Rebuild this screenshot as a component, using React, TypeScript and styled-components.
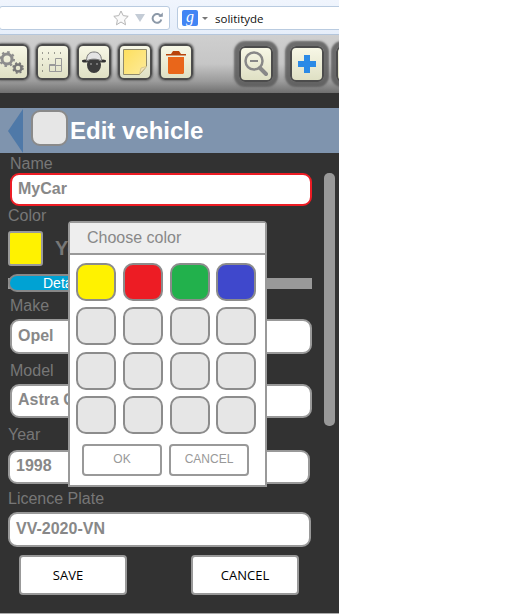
import React from 'react';
import styled, { createGlobalStyle } from 'styled-components';

const GlobalStyle = createGlobalStyle`
  html, body {
    margin: 0;
    padding: 0;
    background: #fff;
    font-family: 'Liberation Sans', Arial, sans-serif;
  }
`;

const Screen = styled.div`
  position: relative;
  width: 339px;
  height: 614px;
  overflow: hidden;
  background: #323232;
`;

const BrowserBar = styled.div`
  height: 35px;
  box-sizing: border-box;
  padding-top: 6px;
  display: flex;
  gap: 7px;
  background: linear-gradient(#f0f5fd, #e6eefa);
  border-bottom: 1px solid #b4c6dc;
`;

const UrlBox = styled.div`
  width: 171px;
  height: 24px;
  margin-left: -1px;
  box-sizing: border-box;
  display: flex;
  align-items: center;
  justify-content: flex-end;
  gap: 6px;
  padding-right: 6px;
  background: #fff;
  border: 1px solid #b9cbe0;
  border-radius: 3px;
`;

const SearchBox = styled.div`
  flex: 1;
  height: 24px;
  margin-right: -10px;
  box-sizing: border-box;
  display: flex;
  align-items: center;
  gap: 4px;
  padding-left: 4px;
  background: #fff;
  border: 1px solid #b9cbe0;
  border-radius: 3px;
  font-family: 'Open Sans', sans-serif;
  font-size: 11.5px;
  color: #111;
`;

const GoogleBadge = styled.span`
  width: 16px;
  height: 16px;
  border-radius: 2px;
  background: #4285f4;
  color: #fff;
  font-family: 'Liberation Serif', serif;
  font-style: italic;
  font-size: 16px;
  line-height: 13px;
  text-align: center;
`;

const Caret = styled.span`
  width: 0;
  height: 0;
  margin-right: 3px;
  border-left: 3px solid transparent;
  border-right: 3px solid transparent;
  border-top: 3px solid #777;
`;

const Toolbar = styled.div`
  height: 58px;
  box-sizing: border-box;
  display: flex;
  padding-top: 9px;
  margin-left: -5px;
  background: linear-gradient(#cfcfcf 0, #c6c6c6 50%, #9b9b9b 80%, #6f6f6f 100%);
`;

const ToolButton = styled.div<{ $halo?: boolean; $gapLeft?: number }>`
  flex: none;
  width: 34px;
  height: 36px;
  box-sizing: border-box;
  margin-left: ${p => p.$gapLeft ?? 7}px;
  margin-top: ${p => (p.$halo ? 2 : 0)}px;
  display: flex;
  align-items: center;
  justify-content: center;
  border: 2px solid #4c4c4c;
  border-radius: 6px;
  background: linear-gradient(#f7f7e6, #dfe0c4);
  box-shadow: ${p => (p.$halo ? '0 0 2px 5px rgba(90, 90, 90, 0.85)' : '0 0 2px 1px #6a6a6a')};
  &:first-child {
    margin-left: 0;
  }
`;

const Gap = styled.div`
  height: 15px;
`;

const Header = styled.div`
  height: 45px;
  display: flex;
  align-items: center;
  background: #7f94ae;
`;

const BackArrow = styled.div`
  width: 0;
  height: 0;
  margin-left: 8px;
  border-top: 22px solid transparent;
  border-bottom: 22px solid transparent;
  border-right: 15px solid #4f79a8;
`;

const HeaderBox = styled.div`
  width: 37px;
  height: 36px;
  box-sizing: border-box;
  margin-left: 8px;
  margin-top: -5px;
  background: #e6e6e6;
  border: 2px solid #8a8a8a;
  border-radius: 9px;
`;

const Title = styled.h1`
  margin: 0 0 0 2px;
  font-size: 24px;
  font-weight: bold;
  color: #fff;
`;

const Body = styled.div`
  display: flex;
`;

const Form = styled.div`
  width: 320px;
  flex: none;
`;

const Scrollbar = styled.div`
  width: 11px;
  height: 253px;
  margin: 20px 0 0 4px;
  border-radius: 5px;
  background: #999;
`;

const Label = styled.div<{ $left: number; $top: number; $height?: number }>`
  margin: ${p => p.$top}px 0 0 ${p => p.$left}px;
  height: ${p => p.$height ?? 18}px;
  line-height: 18px;
  font-size: 16px;
  color: #777;
`;

const Input = styled.div<{ $left: number; $error?: boolean; $height?: number; $width?: number }>`
  width: ${p => p.$width ?? 302}px;
  height: ${p => p.$height ?? 35}px;
  box-sizing: border-box;
  margin-left: ${p => p.$left}px;
  padding: 0 0 2px 6px;
  display: flex;
  align-items: center;
  background: #fff;
  border: 2px solid ${p => (p.$error ? '#ed1c24' : '#999')};
  border-radius: 9px;
  font-size: 16px;
  font-weight: bold;
  color: #888;
`;

const ColorRow = styled.div`
  display: flex;
  align-items: center;
  margin: 6px 0 0 8px;
`;

const ColorPreview = styled.div`
  width: 35px;
  height: 35px;
  box-sizing: border-box;
  background: #fff200;
  border: 2px solid #999;
  border-radius: 3px;
`;

const ColorName = styled.div`
  margin-left: 12px;
  font-size: 20px;
  font-weight: bold;
  color: #777;
`;

const DetailsTrack = styled.div`
  position: relative;
  display: flex;
  align-items: center;
  width: 304px;
  height: 18px;
  margin: 8px 0 0 8px;
`;

const DetailsBar = styled.div`
  flex: 1;
  height: 11px;
  background: #999;
`;

const DetailsPill = styled.div`
  position: absolute;
  left: 0;
  top: 0;
  width: 112px;
  height: 18px;
  box-sizing: border-box;
  border: 2px solid #888;
  border-radius: 9px;
  background: #00a2d3;
  color: #fff;
  font-size: 14px;
  line-height: 14px;
  padding-left: 33px;
`;

const Actions = styled.div`
  display: flex;
  gap: 64px;
  margin: 8px 0 0 19px;
`;

const ActionButton = styled.div<{ $offset?: number }>`
  width: 108px;
  height: 40px;
  box-sizing: border-box;
  padding-right: ${p => p.$offset ?? 0}px;
  display: flex;
  align-items: center;
  justify-content: center;
  background: #fff;
  border: 2px solid #999;
  border-radius: 4px;
  font-family: 'Open Sans', sans-serif;
  font-size: 13px;
  color: #000;
`;

const BottomLine = styled.div`
  position: absolute;
  left: 0;
  right: 0;
  bottom: 0;
  height: 1px;
  background: #aaa;
`;

const Modal = styled.div`
  position: absolute;
  left: 68px;
  top: 221px;
  width: 199px;
  height: 266px;
  box-sizing: border-box;
  background: #fff;
  border: 2px solid #999;
  border-radius: 4px 4px 0 0;
`;

const ModalHead = styled.div`
  height: 32px;
  box-sizing: border-box;
  padding: 6px 0 0 17px;
  background: #eee;
  border-bottom: 2px solid #999;
  font-size: 16px;
  line-height: 18px;
  color: #888;
`;

const SwatchGrid = styled.div`
  display: grid;
  grid-template-columns: repeat(4, 40px);
  grid-auto-rows: 38px;
  column-gap: 6.8px;
  row-gap: 6.4px;
  padding: 8px 0 0 6px;
`;

const Swatch = styled.div<{ $color?: string }>`
  box-sizing: border-box;
  background: ${p => p.$color ?? '#e6e6e6'};
  border: 2px solid #8c8c8c;
  border-radius: 10px;
`;

const ModalActions = styled.div`
  display: flex;
  gap: 7px;
  margin: 10px 0 0 12px;
`;

const ModalButton = styled.div`
  width: 80px;
  height: 32px;
  box-sizing: border-box;
  padding-bottom: 2px;
  display: flex;
  align-items: center;
  justify-content: center;
  border: 2px solid #999;
  border-radius: 4px;
  font-size: 12px;
  color: #999;
`;

const StarIcon = () => (
  <svg width="16" height="16" viewBox="0 0 16 16">
    <path d="M8 1l2.2 4.6 5 .7-3.6 3.5.9 5L8 12l-4.5 2.8.9-5L.8 6.3l5-.7z" fill="#fafafa" stroke="#b5b5b5" />
  </svg>
);

const DropIcon = () => (
  <svg width="10" height="8" viewBox="0 0 10 8">
    <path d="M0 0h10L5 8z" fill="#c4ccd6" />
  </svg>
);

const ReloadIcon = () => (
  <svg width="12" height="12" viewBox="0 0 12 12">
    <path d="M10 4.5A4.4 4.4 0 1 0 10.3 7.5" fill="none" stroke="#8c99a8" strokeWidth="2" />
    <path d="M7.5 4.8h4.3V.5z" fill="#8c99a8" />
  </svg>
);

const GearsIcon = () => (
  <svg width="24" height="24" viewBox="0 0 24 24">
    <circle cx="7" cy="9" r="5" fill="none" stroke="#8d8d8d" strokeWidth="3" />
    <circle cx="7" cy="9" r="7" fill="none" stroke="#8d8d8d" strokeWidth="2" strokeDasharray="2.5 3" />
    <circle cx="18" cy="18" r="3.5" fill="none" stroke="#777" strokeWidth="2.5" />
    <circle cx="18" cy="18" r="5" fill="none" stroke="#777" strokeWidth="1.5" strokeDasharray="2 2" />
  </svg>
);

const GridIcon = () => (
  <svg width="24" height="24" viewBox="0 0 24 24">
    <path d="M1 3h1M7 3h1M13 3h1M19 3h1M1 9h1M7 9h1M1 15h1M1 21h1" stroke="#444" />
    <path d="M8.500 21.500v-7h6v-6h6v13zM8.500 15.500h12M14.500 14.500v7" fill="none" stroke="#999" />
  </svg>
);

const SheepIcon = () => (
  <svg width="24" height="24" viewBox="0 0 24 24">
    <ellipse cx="3" cy="11" rx="3" ry="1.500" fill="#333" />
    <ellipse cx="21" cy="11" rx="3" ry="1.500" fill="#333" />
    <ellipse cx="12" cy="15" rx="7" ry="8" fill="#3c3c3c" />
    <path d="M4.500 11C4.500 4 8 2 12 2s7.500 2 7.500 9c-4-2.500-11-2.500-15 0z" fill="#e4e4e4" stroke="#777" />
    <circle cx="9" cy="14" r="1" fill="#888" />
    <circle cx="15" cy="14" r="1" fill="#888" />
  </svg>
);

const NoteIcon = () => (
  <svg width="24" height="26" viewBox="0 0 24 26">
    <defs>
      <linearGradient id="note" x1="0" y1="0" x2="1" y2="1">
        <stop offset="0" stopColor="#fddf5e" />
        <stop offset="1" stopColor="#fdeb9a" />
      </linearGradient>
    </defs>
    <path d="M.5.500h23v17l-7 8H.5z" fill="url(#note)" stroke="#8f8a6c" />
    <path d="M16.500 25l1.500-6 5.500-1.500z" fill="#f3e3b8" stroke="#d8c98d" />
  </svg>
);

const TrashIcon = () => (
  <svg width="20" height="24" viewBox="0 0 20 24">
    <path d="M0 4h20v1.500H0zM6 2.500L7 1h6l1 1.500 1 1.500H5z" fill="#b8430b" />
    <path d="M2 7h16v16l-1 1H3l-1-1z" fill="#e9661a" />
  </svg>
);

const ZoomOutIcon = () => (
  <svg width="24" height="28" viewBox="0 0 24 28">
    <circle cx="10" cy="11" r="8.500" fill="none" stroke="#888" strokeWidth="2.500" />
    <path d="M6 11h8" stroke="#888" strokeWidth="2" />
    <path d="M16 18l6 6" stroke="#888" strokeWidth="4" strokeLinecap="round" />
  </svg>
);

const PlusIcon = () => (
  <svg width="18" height="18" viewBox="0 0 18 18">
    <path d="M6 0h6v6h6v6h-6v6H6v-6H0V6h6z" fill="#2b8ae6" />
  </svg>
);

const swatches = ['#fff200', '#ed1c24', '#22b14c', '#3f48cc', ...Array(12).fill(undefined)];

export default function App() {
  return (
    <Screen>
      <GlobalStyle />
      <BrowserBar>
        <UrlBox>
          <StarIcon />
          <DropIcon />
          <ReloadIcon />
        </UrlBox>
        <SearchBox>
          <GoogleBadge>g</GoogleBadge>
          <Caret />
          solitityde
        </SearchBox>
      </BrowserBar>
      <Toolbar>
        <ToolButton><GearsIcon /></ToolButton>
        <ToolButton><GridIcon /></ToolButton>
        <ToolButton><SheepIcon /></ToolButton>
        <ToolButton><NoteIcon /></ToolButton>
        <ToolButton><TrashIcon /></ToolButton>
        <ToolButton $halo $gapLeft={46}><ZoomOutIcon /></ToolButton>
        <ToolButton $halo $gapLeft={17}><PlusIcon /></ToolButton>
        <ToolButton $halo $gapLeft={12} />
      </Toolbar>
      <Gap />
      <Header>
        <BackArrow />
        <HeaderBox />
        <Title>Edit vehicle</Title>
      </Header>
      <Body>
        <Form>
          <Label $left={10} $top={2}>Name</Label>
          <Input $left={10} $error $height={33}>MyCar</Input>
          <Label $left={8} $top={1}>Color</Label>
          <ColorRow>
            <ColorPreview />
            <ColorName>Yellow</ColorName>
          </ColorRow>
          <DetailsTrack>
            <DetailsBar />
            <DetailsPill>Details</DetailsPill>
          </DetailsTrack>
          <Label $left={10} $top={5} $height={22}>Make</Label>
          <Input $left={10}>Opel</Input>
          <Label $left={10} $top={8} $height={22}>Model</Label>
          <Input $left={10} $height={34}>Astra G</Input>
          <Label $left={8} $top={8} $height={24}>Year</Label>
          <Input $left={8} $height={34}>1998</Input>
          <Label $left={8} $top={6} $height={22}>Licence Plate</Label>
          <Input $left={8} $width={303}>VV-2020-VN</Input>
          <Actions>
            <ActionButton $offset={10}>SAVE</ActionButton>
            <ActionButton>CANCEL</ActionButton>
          </Actions>
        </Form>
        <Scrollbar />
      </Body>
      <Modal>
        <ModalHead>Choose color</ModalHead>
        <SwatchGrid>
          {swatches.map((color, i) => (
            <Swatch key={i} $color={color} />
          ))}
        </SwatchGrid>
        <ModalActions>
          <ModalButton>OK</ModalButton>
          <ModalButton>CANCEL</ModalButton>
        </ModalActions>
      </Modal>
      <BottomLine />
    </Screen>
  );
}
